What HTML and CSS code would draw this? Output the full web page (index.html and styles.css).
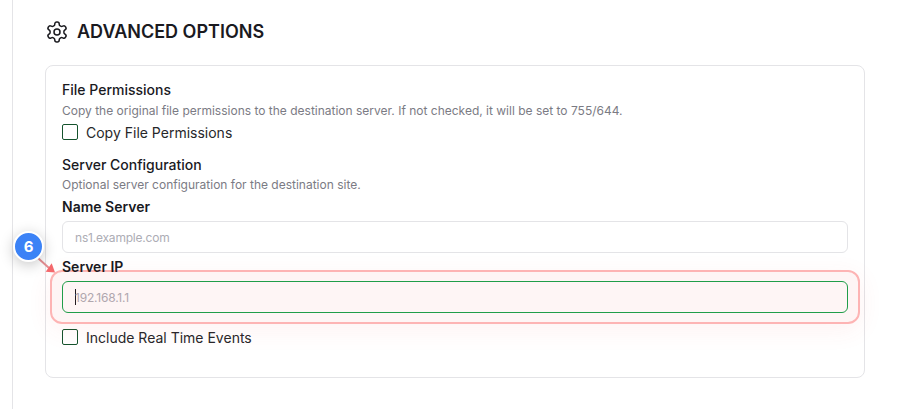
FILE: index.html
```html
<!DOCTYPE html>
<html lang="en">
<head>
  <meta charset="UTF-8">
  <title>Advanced Options</title>
  <link rel="stylesheet" href="styles.css">
</head>
<body>
  <main class="panel">
    <h2 class="section-title">
      <svg class="gear" viewBox="0 0 24 24" fill="none" stroke="currentColor" stroke-width="1.500" stroke-linecap="round" stroke-linejoin="round">
        <path d="M12.22 2h-.44a2 2 0 0 0-2 2v.18a2 2 0 0 1-1 1.73l-.43.25a2 2 0 0 1-2 0l-.15-.08a2 2 0 0 0-2.73.73l-.22.38a2 2 0 0 0 .73 2.73l.15.1a2 2 0 0 1 1 1.72v.51a2 2 0 0 1-1 1.74l-.15.09a2 2 0 0 0-.73 2.73l.22.38a2 2 0 0 0 2.73.73l.15-.08a2 2 0 0 1 2 0l.43.25a2 2 0 0 1 1 1.73V20a2 2 0 0 0 2 2h.44a2 2 0 0 0 2-2v-.18a2 2 0 0 1 1-1.73l.43-.25a2 2 0 0 1 2 0l.15.08a2 2 0 0 0 2.73-.73l.22-.39a2 2 0 0 0-.73-2.73l-.15-.08a2 2 0 0 1-1-1.74v-.5a2 2 0 0 1 1-1.74l.15-.09a2 2 0 0 0 .73-2.73l-.22-.38a2 2 0 0 0-2.73-.73l-.15.08a2 2 0 0 1-2 0l-.43-.25a2 2 0 0 1-1-1.73V4a2 2 0 0 0-2-2z"/>
        <circle cx="12" cy="12" r="3"/>
      </svg>
      ADVANCED OPTIONS
    </h2>

    <section class="card">
      <h3 class="group-title">File Permissions</h3>
      <p class="hint">Copy the original file permissions to the destination server. If not checked, it will be set to 755/644.</p>
      <label class="check"><span class="box"></span>Copy File Permissions</label>

      <h3 class="group-title second">Server Configuration</h3>
      <p class="hint">Optional server configuration for the destination site.</p>

      <div class="field first">
        <label class="field-label">Name Server</label>
        <div class="input">ns1.example.com</div>
      </div>

      <div class="field">
        <label class="field-label">Server IP</label>
        <div class="input-wrap">
          <div class="input active"><span class="caret"></span>192.168.1.1</div>
          <div class="highlight"></div>
        </div>
      </div>

      <label class="check last"><span class="box"></span>Include Real Time Events</label>
    </section>
  </main>

  <!-- step marker + arrow pointing at the highlighted field -->
  <svg class="arrow" viewBox="0 0 30 30">
    <line x1="3.500" y1="3.500" x2="14" y2="13" stroke="#e58e92" stroke-width="2"/>
    <polygon points="20,17.500 10.700,16.700 16.700,8.300" fill="#f4686c"/>
  </svg>
  <div class="badge">6</div>
</body>
</html>
```

FILE: styles.css
```css
*, *::before, *::after {
  box-sizing: border-box;
}
body {
  margin: 0;
  height: 409px;
  overflow: hidden;
  background: #fff;
  font-family: "Inter", sans-serif;
  color: #1a1a1f;
}
/* Page panel with the rule on its left */
.panel {
  margin-left: 12px;
  height: 409px;
  padding: 0 35px 0 32px;
  border-left: 1px solid #e4e4e7;
}
.section-title {
  display: flex;
  align-items: center;
  gap: 8px;
  height: 65px;
  margin: 0;
  padding: 0 0 2px;
  font-size: 18px;
  font-weight: 600;
}
.gear {
  width: 24px;
  height: 24px;
}
.card {
  height: 313px;
  padding: 15px 16px 0;
  border: 1px solid #e4e4e7;
  border-radius: 8px;
}
.group-title {
  margin: 0;
  font-size: 14px;
  line-height: 18px;
  font-weight: 500;
}
.group-title.second {
  margin-top: 14px;
}
.hint {
  margin: 3px 0 0;
  font-size: 12px;
  line-height: 18px;
  color: #7b7b84;
}
.second + .hint {
  margin-top: 2px;
}
.check {
  display: flex;
  align-items: center;
  gap: 8px;
  height: 20px;
  margin-top: 2px;
  font-size: 14px;
  color: #27272a;
}
.check.last {
  margin-top: 14px;
}
.box {
  width: 16px;
  height: 16px;
  border: 1px solid #14532d;
  border-radius: 2px;
}
.field {
  margin-top: 5px;
}
.field.first {
  margin-top: 4px;
}
/* label sits above the highlight box, which starts right under it */
.field-label {
  display: block;
  position: relative;
  z-index: 1;
  height: 20px;
  font-size: 14px;
  line-height: 18px;
  font-weight: 600;
}
.input {
  display: flex;
  align-items: center;
  height: 32px;
  margin-top: 3px;
  padding: 0 12px;
  border: 1px solid #e4e4e7;
  border-radius: 6px;
  font-size: 12px;
  letter-spacing: -0.2px;
  color: #adadb5;
}
.input.active {
  border-color: #16a34a;
}
.caret {
  width: 1px;
  height: 16px;
  margin-right: -1px;
  background: #1a1a1f;
}
.input-wrap {
  position: relative;
}
/* Overlays drawn on top of the form */
.highlight {
  position: absolute;
  inset: -11px -12px;
  border: 2px solid #fdb4b4;
  border-radius: 12px;
  background: rgba(239, 68, 68, 0.05);
  box-shadow: 0 6px 26px rgba(239, 68, 68, 0.07);
}
.badge {
  position: absolute;
  left: 13px;
  top: 231px;
  width: 31px;
  height: 31px;
  border: 2px solid #fff;
  border-radius: 50%;
  background: #3b82f6;
  box-shadow: 0 3px 14px rgba(0, 0, 0, 0.22);
  color: #fff;
  font-size: 15px;
  font-weight: 700;
  line-height: 27px;
  text-align: center;
}
.arrow {
  position: absolute;
  left: 35px;
  top: 255px;
  width: 30px;
  height: 30px;
}
```
